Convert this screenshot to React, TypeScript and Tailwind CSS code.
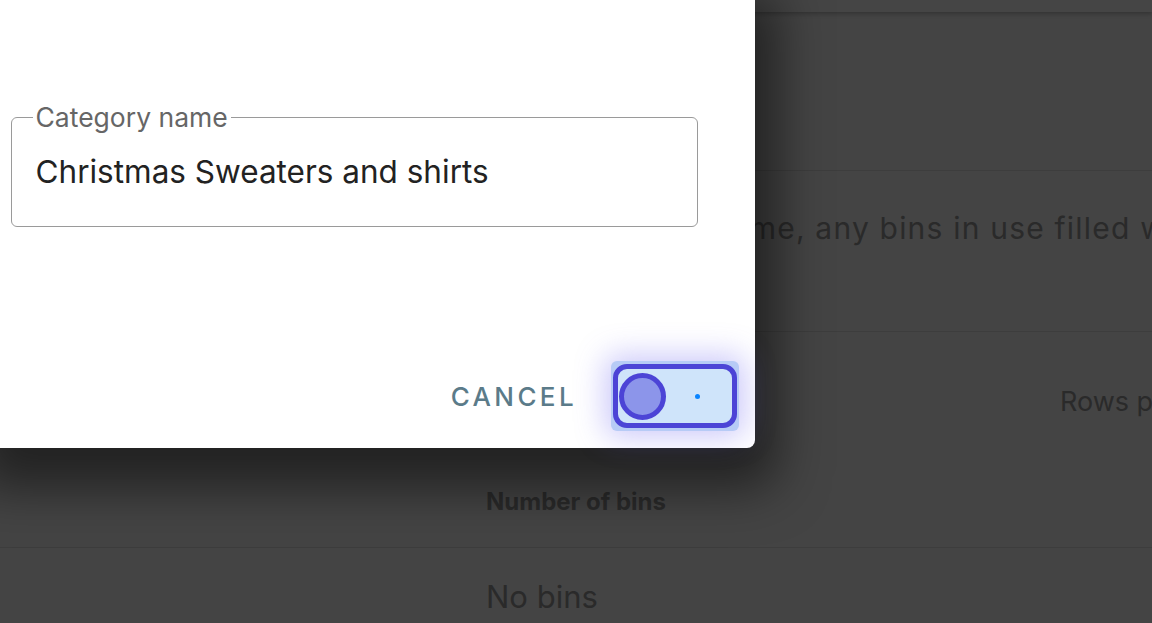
import React from 'react';

export default function App() {
  return (
    <div
      className="relative h-[623px] w-[1152px] overflow-hidden bg-[#444444] text-[#2a2a2a]"
      style={{ fontFamily: 'Inter, "Noto Sans", sans-serif' }}
    >
      {/* Page behind the backdrop */}
      <div className="h-[12px] bg-[#454545] shadow-[0_2px_4px_rgba(0,0,0,0.25)]" />
      <div className="h-[159px] border-b border-[#3d3d3d]" />
      <div className="h-[161px] border-b border-[#3d3d3d] pl-[243px] pt-[40px]">
        <p className="whitespace-nowrap text-[30px] leading-[34px] tracking-[0.04em]">
          Deleting category at the same name, any bins in use filled with it will be emptied
        </p>
      </div>
      <div className="flex h-[216px] flex-col border-b border-[#3d3d3d]">
        <div className="flex h-[140px] items-center justify-end">
          <span className="w-[92px] overflow-hidden whitespace-nowrap text-[27px]">Rows per page</span>
        </div>
        <div className="pl-[486px] pt-[12px] text-[24px] font-bold">Number of bins</div>
      </div>
      <div className="flex h-[98px] items-center pl-[486px] text-[31px]">No bins</div>

      {/* Dialog */}
      <div className="absolute left-0 top-0 flex h-[448px] w-[755px] flex-col rounded-br-lg bg-white shadow-[0_18px_50px_22px_rgba(0,0,0,0.5)]">
        <div className="pl-[11px] pr-[57px] pt-[105px]">
          <fieldset className="relative h-[122px] rounded-[6px] border-[1.5px] border-[#9a9a9a] px-[23.5px]">
            <legend className="-ml-[3px] px-[3px] text-[26.5px] leading-[24px] text-[#666666]">Category name</legend>
            <div className="pt-[25px] text-[31.5px] leading-[36px] text-[#222222]">Christmas Sweaters and shirts</div>
          </fieldset>
        </div>
        <div className="mt-auto flex items-center justify-end gap-[34px] pb-[17px] pr-[16px]">
          <button className="text-[26px] font-medium tracking-[0.13em] text-[#5b7b89]">CANCEL</button>
          <button className="flex h-[70px] w-[128px] items-center justify-center rounded-[6px] bg-[#b7cbf6] shadow-[0_0_30px_6px_rgba(110,100,240,0.35)]">
            <span className="flex h-[64px] w-[124px] items-center rounded-[14px] border-[5px] border-[#4c44d6] bg-[#cfe4fa] pl-[1px]">
              <span className="h-[47px] w-[47px] rounded-full border-[5px] border-[#4c44d6] bg-[#8c95ea]" />
              <span className="ml-[29px] h-[5px] w-[5px] rounded-full bg-[#0a84ff]" />
            </span>
          </button>
        </div>
      </div>
    </div>
  );
}
